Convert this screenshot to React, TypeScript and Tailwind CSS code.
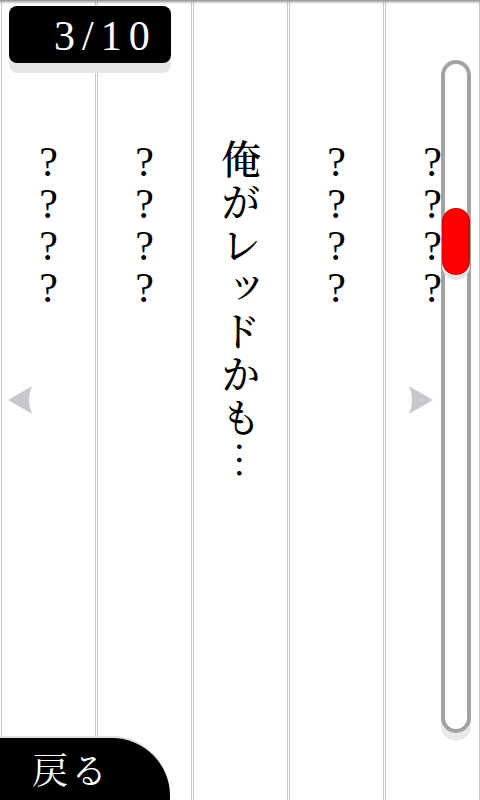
const serif = "font-['Liberation_Serif','Noto_Serif_CJK_JP','Noto_Sans_CJK_JP',serif]";

type Col = { kind: "q" } | { kind: "text"; text: string };

const columns: Col[] = [
  { kind: "q" },
  { kind: "q" },
  { kind: "text", text: "俺がレッドかも…" },
  { kind: "q" },
  { kind: "q" },
];

function Column({ col }: { col: Col }) {
  return (
    <div className="flex w-[96px] shrink-0 pl-[1px]">
      <div className="flex flex-1 flex-col items-center border-x border-[#c8c8c8]">
        {col.kind === "q" ? (
          <div className={`flex flex-col items-center pt-[141px] text-[42px] leading-[42px] text-black ${serif}`}>
            <span>?</span>
            <span>?</span>
            <span>?</span>
            <span>?</span>
          </div>
        ) : (
          <div className="pt-[139px] text-[40px] font-medium leading-[40px] tracking-[3px] text-black [writing-mode:vertical-rl] font-['Noto_Serif_CJK_JP','Noto_Sans_CJK_JP',serif]">
            {col.text}
          </div>
        )}
      </div>
    </div>
  );
}

export default function App() {
  return (
    <div className="relative flex h-[800px] w-[480px] overflow-hidden bg-white">
      {columns.map((c, i) => (
        <Column key={i} col={c} />
      ))}

      {/* top edge shade */}
      <div className="absolute inset-x-0 top-0 h-[4px] bg-gradient-to-b from-[#8f8f8f] to-transparent" />

      {/* page badge */}
      <div
        className={`absolute left-[9px] top-[6px] flex h-[57px] w-[162px] items-center rounded-lg bg-black pl-[45px] pt-[3px] text-[42px] leading-none tracking-[7px] text-white shadow-[0_10px_0_#e6e6e6] ${serif}`}
      >
        3/10
      </div>

      {/* page arrows */}
      <svg className="absolute left-[8px] top-[386px]" width="25" height="28" viewBox="0 0 25 28">
        <path d="M0 14 L24 0 Q18 14 24 28 Z" fill="#c9c8cd" />
      </svg>
      <svg className="absolute left-[408px] top-[386px]" width="25" height="28" viewBox="0 0 25 28">
        <path d="M25 14 L1 0 Q7 14 1 28 Z" fill="#c9c8cd" />
      </svg>

      {/* scrollbar */}
      <div className="absolute left-[441px] top-[60px] h-[673px] w-[30px] rounded-full border-4 border-[#a2a2a2] bg-white shadow-[0_8px_0_#e8e8e8]">
        <div className="absolute left-[-3px] top-[144px] h-[67px] w-[28px] rounded-full border-2 border-[#e00000] bg-[#ff0000] shadow-[0_5px_0_#e4e4e4]" />
      </div>

      {/* back button */}
      <div className="absolute bottom-0 left-0 flex h-[62px] w-[170px] items-center rounded-tr-[58px] bg-black pl-[32px] shadow-[0_-2px_0_#e0e0e0]">
        <span className="text-[36px] leading-none tracking-[3px] text-white font-['Noto_Serif_CJK_JP','Noto_Sans_CJK_JP',serif]">
          戻る
        </span>
      </div>
    </div>
  );
}
